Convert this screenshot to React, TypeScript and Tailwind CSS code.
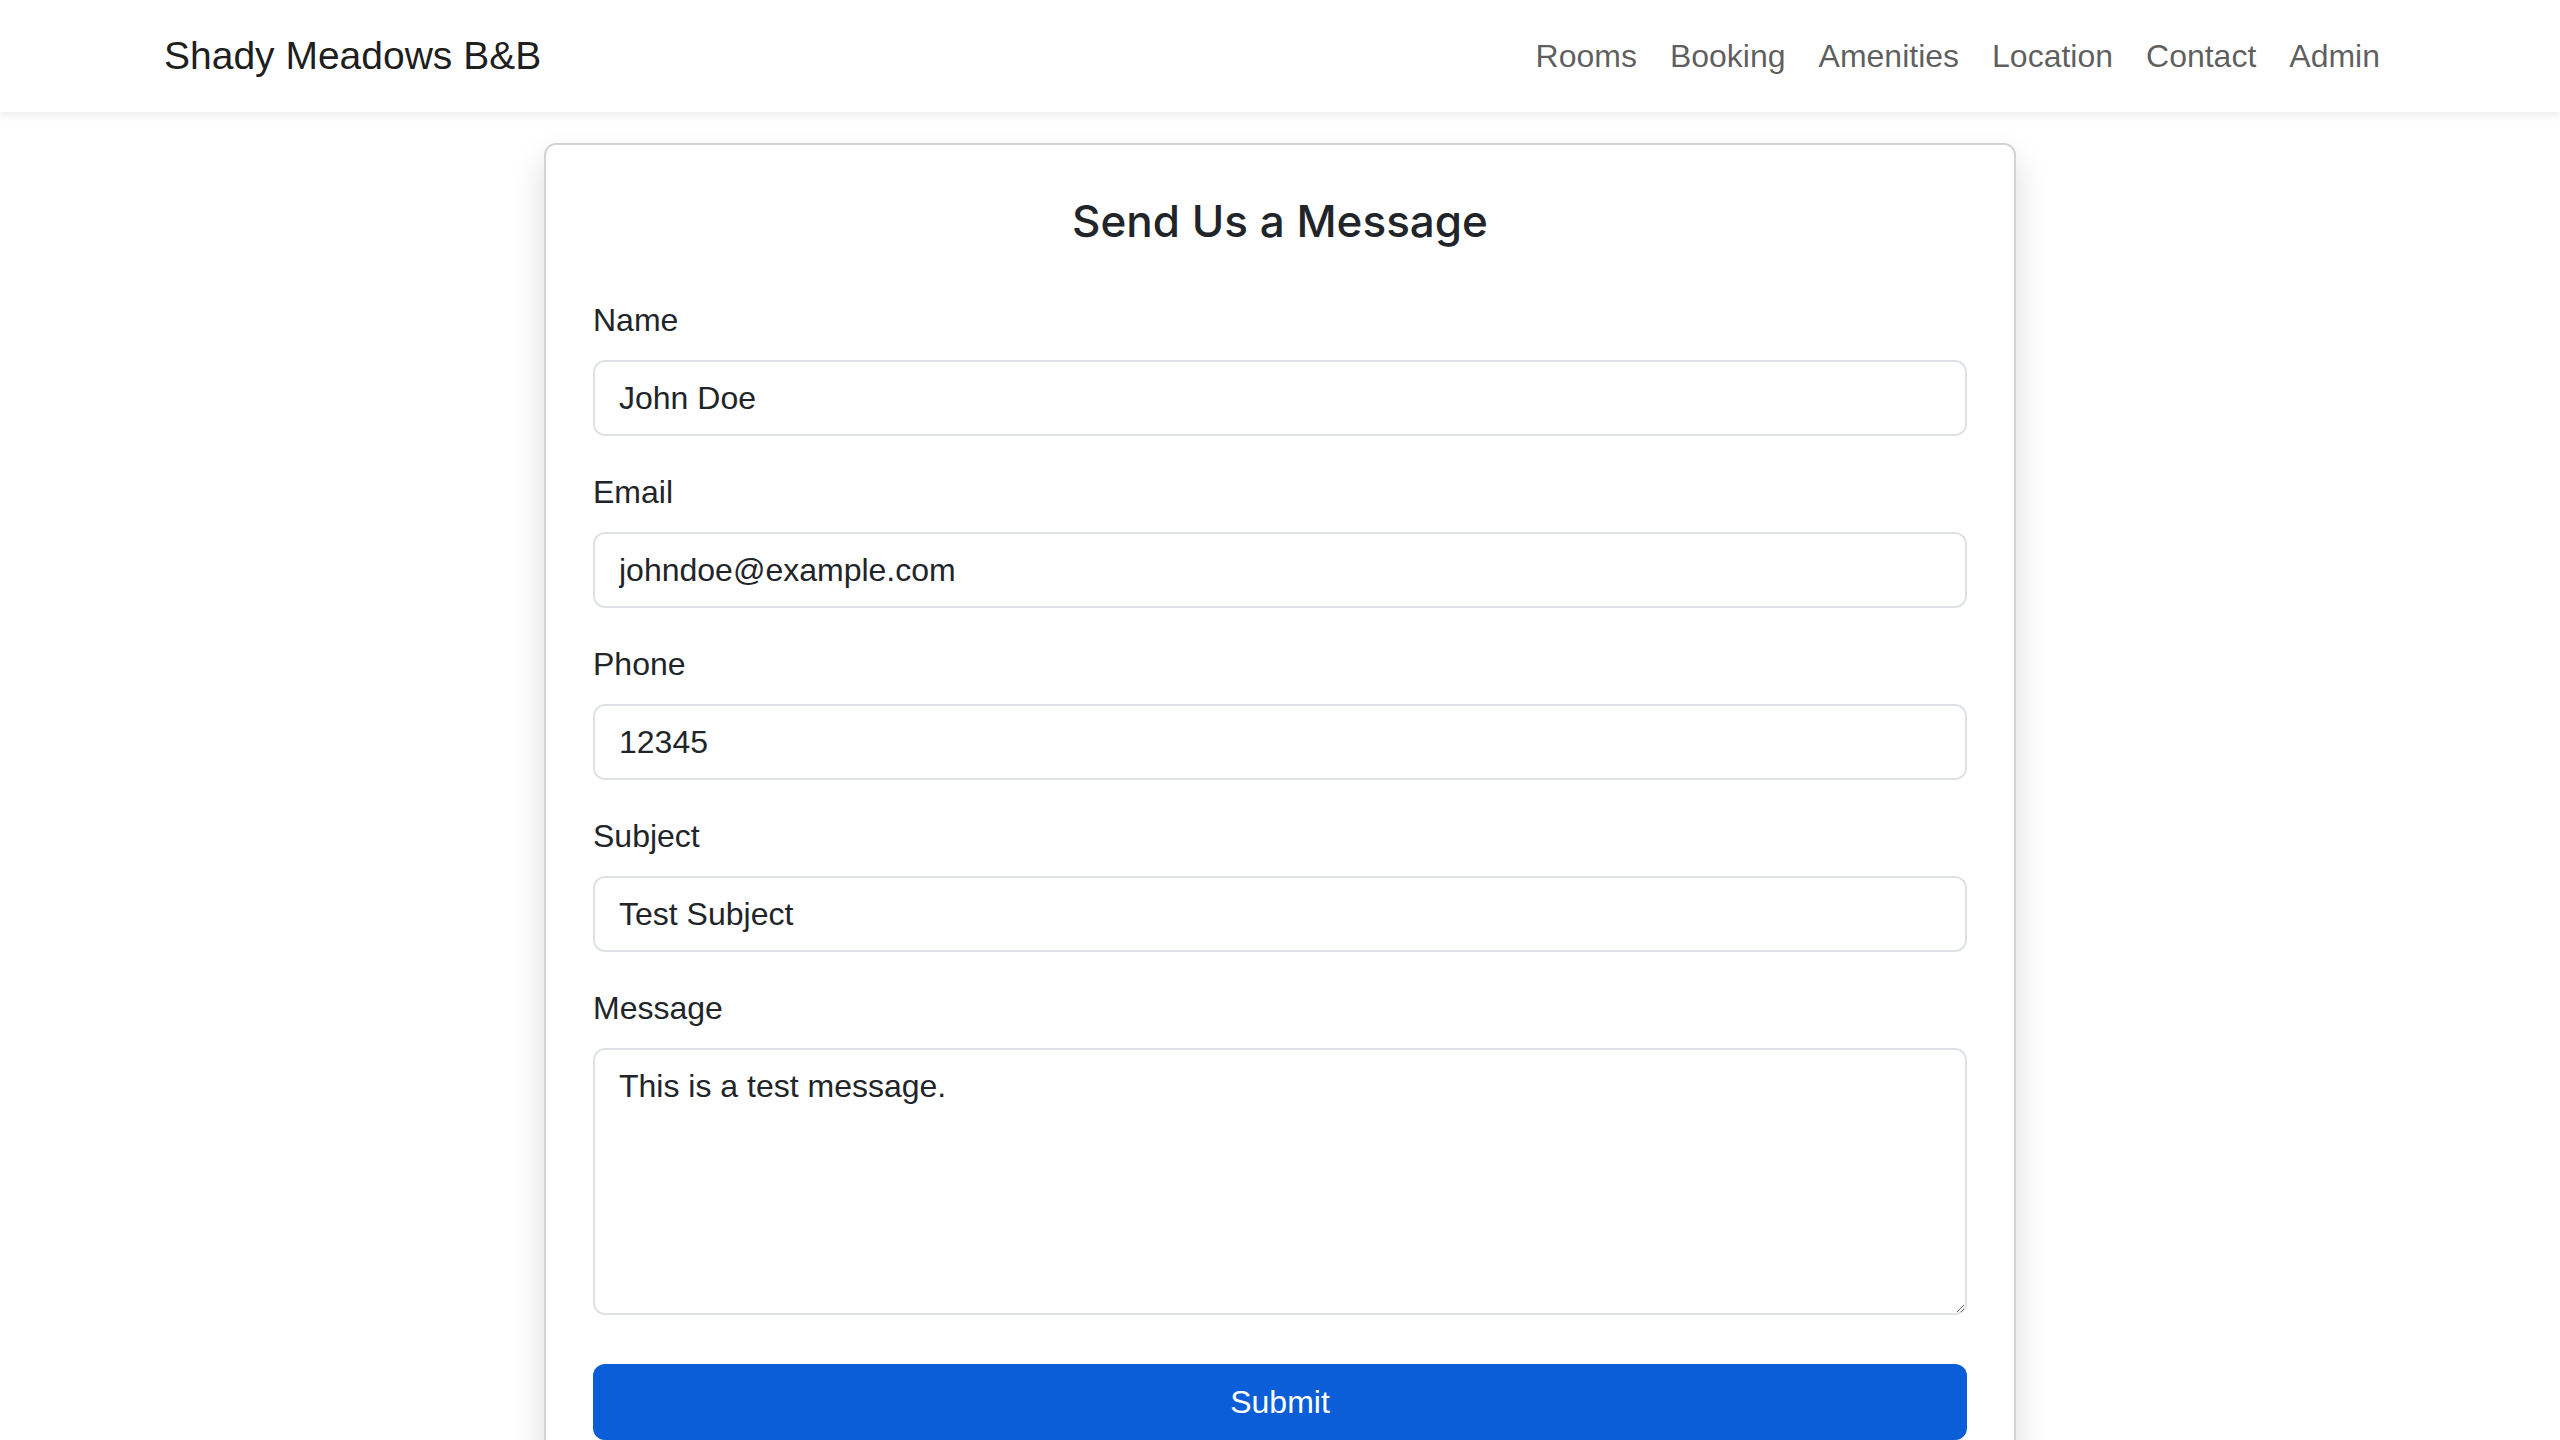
import React from "react";

const links = ["Rooms", "Booking", "Amenities", "Location", "Contact", "Admin"];

const fields = [
  { label: "Name", value: "John Doe", type: "text" },
  { label: "Email", value: "johndoe@example.com", type: "email" },
  { label: "Phone", value: "12345", type: "tel" },
  { label: "Subject", value: "Test Subject", type: "text" },
];

export default function App() {
  return (
    <div className="min-h-screen bg-white text-[#212529] font-['Liberation_Sans',Arial,sans-serif]">
      <nav className="h-[112px] bg-white shadow-[0_4px_8px_rgba(0,0,0,0.075)] relative z-10">
        <div className="mx-auto flex h-full w-[2280px] items-center justify-between px-[24px]">
          <span className="text-[39px] leading-[60px] text-black/90">Shady Meadows B&amp;B</span>
          <ul className="flex">
            {links.map((l) => (
              <li key={l}>
                <a href="#" className="block px-[17px] py-[16px] text-[32px] leading-[48px] text-black/65 last:pr-[16px]">
                  {l}
                </a>
              </li>
            ))}
          </ul>
        </div>
      </nav>

      <main className="pt-[31px]">
        <div className="mx-auto w-[1472px] rounded-[12px] border-2 border-[#d3d3d3] bg-white shadow-[0_16px_32px_rgba(0,0,0,0.15)]">
          <form className="p-[47px]" onSubmit={(e) => e.preventDefault()}>
            <h3 className="mb-[46px] text-center font-['Inter',sans-serif] text-[44px] font-medium leading-[58px]">
              Send Us a Message
            </h3>
            {fields.map((f) => (
              <div key={f.label} className="mb-[32px]">
                <label className="mb-[16px] block text-[32px] leading-[48px]">{f.label}</label>
                <input
                  type={f.type}
                  defaultValue={f.value}
                  className="block h-[76px] w-full rounded-[12px] border-2 border-[#dee2e6] px-[24px] text-[32px] leading-[48px] text-[#212529] outline-none"
                />
              </div>
            ))}
            <div className="mb-[49px]">
              <label className="mb-[16px] block text-[32px] leading-[48px]">Message</label>
              <textarea
                rows={5}
                defaultValue="This is a test message."
                className="block h-[267px] w-full rounded-[12px] border-2 border-[#dee2e6] px-[24px] py-[12px] text-[32px] leading-[48px] text-[#212529] outline-none"
              />
            </div>
            <button
              type="submit"
              className="block h-[76px] w-full rounded-[12px] bg-[#0b5ed7] text-[32px] leading-[48px] text-white"
            >
              Submit
            </button>
          </form>
        </div>
      </main>
    </div>
  );
}
